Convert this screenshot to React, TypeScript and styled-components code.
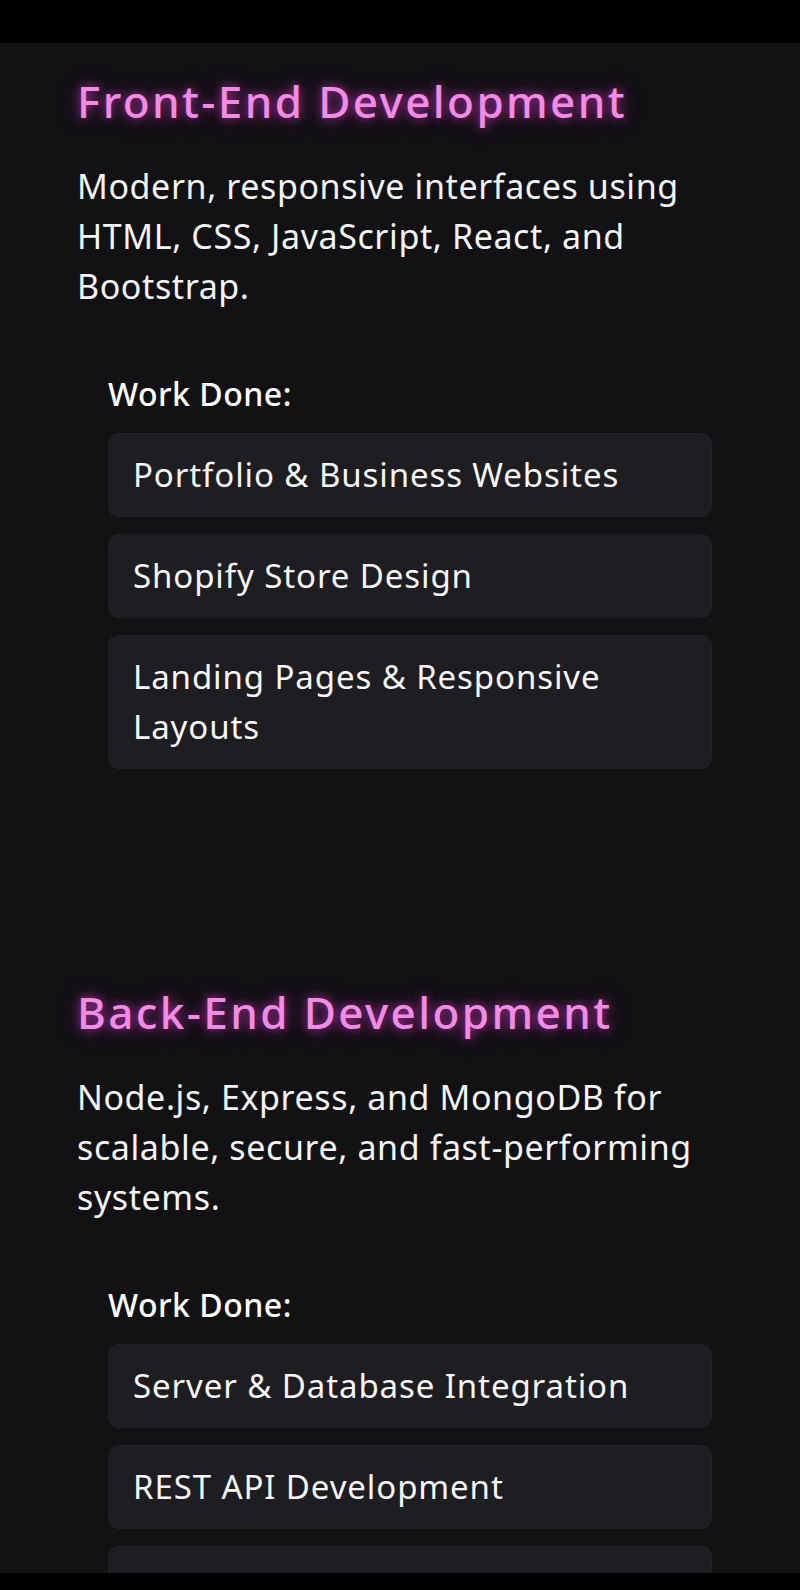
import styled, { createGlobalStyle } from "styled-components";

interface Service {
  title: string;
  summary: string;
  work: string[];
}

const services: Service[] = [
  {
    title: "Front-End Development",
    summary:
      "Modern, responsive interfaces using HTML, CSS, JavaScript, React, and Bootstrap.",
    work: [
      "Portfolio & Business Websites",
      "Shopify Store Design",
      "Landing Pages & Responsive Layouts",
    ],
  },
  {
    title: "Back-End Development",
    summary:
      "Node.js, Express, and MongoDB for scalable, secure, and fast-performing systems.",
    work: [
      "Server & Database Integration",
      "REST API Development",
      "Authentication & Security",
    ],
  },
];

const GlobalStyle = createGlobalStyle`
  html, body {
    margin: 0;
    padding: 0;
    background: #000;
  }
  body {
    font-family: "Noto Sans", "DejaVu Sans", sans-serif;
    color: #ffffff;
    -webkit-font-smoothing: antialiased;
  }
`;

const Page = styled.div`
  display: flex;
  flex-direction: column;
  width: 800px;
  height: 1590px;
  overflow: hidden;
  background: #121114;
`;

// black bands at the top and bottom edges of the phone frame
const Strip = styled.div<{ $height: number }>`
  flex: 0 0 ${(props) => props.$height}px;
  background: #000;
`;

const Content = styled.main`
  flex: 1;
  overflow: hidden;
  padding: 30px 80px 0 77px;
  display: flex;
  flex-direction: column;
  gap: 215px;
`;

const Section = styled.section`
  display: flex;
  flex-direction: column;
`;

const Heading = styled.h2`
  margin: 0;
  font-size: 44px;
  line-height: 56px;
  font-weight: 500;
  letter-spacing: 2.4px;
  color: #f08ce4;
  text-shadow: 0 0 10px rgba(214, 60, 200, 0.75),
    0 0 22px rgba(180, 40, 170, 0.45);
`;

const Summary = styled.p`
  margin: 32px 0 0;
  font-size: 34px;
  line-height: 50px;
  font-weight: 400;
  letter-spacing: 0.6px;
  color: #f4f4f6;
`;

const WorkBlock = styled.div`
  margin-top: 61px;
  padding: 0 8px 0 31px;
  display: flex;
  flex-direction: column;
  gap: 17px;
`;

const WorkLabel = styled.h3`
  margin: 0;
  font-size: 32px;
  line-height: 44px;
  font-weight: 500;
  letter-spacing: 0.5px;
  color: #ffffff;
`;

const WorkList = styled.ul`
  list-style: none;
  margin: 0;
  padding: 0;
  display: flex;
  flex-direction: column;
  gap: 17px;
`;

const WorkItem = styled.li`
  padding: 17px 25px;
  border-radius: 11px;
  background: #1e1d21;
  box-shadow: inset 0 0 0 1px rgba(255, 255, 255, 0.02);
  font-size: 33px;
  line-height: 50px;
  letter-spacing: 0.9px;
  color: #f6f6f8;
`;

export default function App() {
  return (
    <>
      <GlobalStyle />
      <Page>
        <Strip $height={43} />
        <Content>
          {services.map((service) => (
            <Section key={service.title}>
              <Heading>{service.title}</Heading>
              <Summary>{service.summary}</Summary>
              <WorkBlock>
                <WorkLabel>Work Done:</WorkLabel>
                <WorkList>
                  {service.work.map((item) => (
                    <WorkItem key={item}>{item}</WorkItem>
                  ))}
                </WorkList>
              </WorkBlock>
            </Section>
          ))}
        </Content>
        <Strip $height={17} />
      </Page>
    </>
  );
}
